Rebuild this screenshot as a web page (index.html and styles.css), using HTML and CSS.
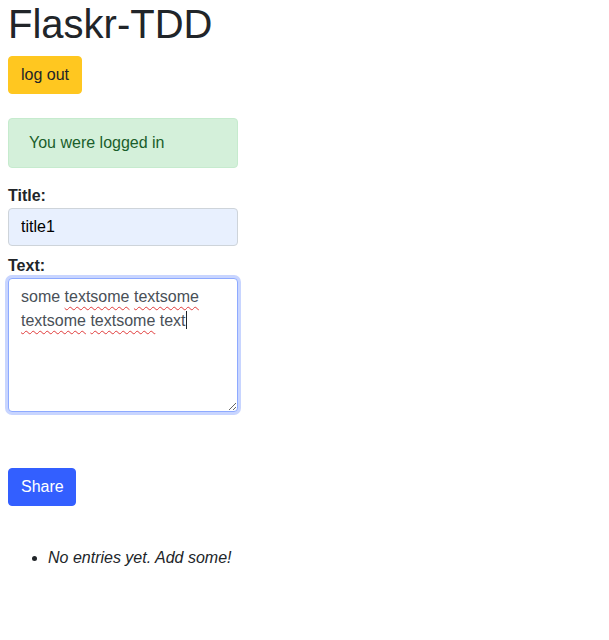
FILE: index.html
```html
<!DOCTYPE html>
<html lang="en">
<head>
<meta charset="utf-8">
<title>Flaskr-TDD</title>
<link rel="stylesheet" href="styles.css">
</head>
<body>
<div class="page">
  <h1 class="title">Flaskr-TDD</h1>
  <a class="btn btn-warning" href="#">log out</a>
  <div class="alert-success">You were logged in</div>
  <form class="add-entry">
    <dl class="fields">
      <dt class="label">Title:</dt>
      <dd class="field"><input class="form-control autofilled" type="text" name="title" value="title1"></dd>
      <dt class="label">Text:</dt>
      <dd class="field"><div class="form-control textarea focused" role="textbox" aria-multiline="true" contenteditable="true" spellcheck="false">some <span class="typo">textsome</span> <span class="typo">textsome</span> <span class="typo">textsome</span> <span class="typo">textsome</span> text<span class="caret"></span></div></dd>
      <dd class="spacer"></dd>
      <dd class="field"><button class="btn btn-primary btn-share" type="button">Share</button></dd>
    </dl>
  </form>
  <ul class="entries">
    <li><em>No entries yet. Add some!</em></li>
  </ul>
</div>
</body>
</html>
```

FILE: styles.css
```css
* { box-sizing: border-box; }
html, body { margin: 0; padding: 0; background: #fff; }
body {
  font-family: "Liberation Sans", Arial, sans-serif;
  font-size: 16px;
  line-height: 1.5;
  color: #212529;
}
.page { padding: 0 8px; }
.title {
  margin: 0 0 8px;
  font-size: 40px;
  font-weight: 400;
  line-height: 1.2;
}
.btn {
  display: inline-block;
  padding: 6px 12px;
  font-family: inherit;
  font-size: 16px;
  line-height: 1.5;
  border: 1px solid transparent;
  border-radius: 4px;
  text-decoration: none;
  cursor: pointer;
}
.btn-warning { background: #ffc720; border-color: #ffc720; color: #212529; }
.btn-primary { background: #335fff; border-color: #335fff; color: #fff; }
.btn-share { padding-right: 11px; }
.alert-success {
  width: 230px;
  margin: 24px 0 16px;
  padding: 12px 20px;
  background: #d4f0da;
  border: 1px solid #c6ebce;
  border-radius: 4px;
  color: #1a5e2b;
}
.add-entry { margin: 0; }
.fields { margin: 0 0 16px; }
.label { font-weight: 700; }
.field { margin: 0 0 8px; }
.spacer { margin: 0; height: 48px; }
.form-control {
  display: block;
  width: 230px;
  padding: 6px 12px;
  font-family: inherit;
  font-size: 16px;
  line-height: 1.5;
  color: #495057;
  background: #fff;
  border: 1px solid #ced4da;
  border-radius: 4px;
}
input.form-control { height: 38px; }
.autofilled { background: #e8f0fe; color: #000; }
.textarea {
  height: 134px;
  overflow: auto;
  resize: vertical;
  outline: none;
}
.focused {
  border-color: #8eaaff;
  box-shadow: 0 0 0 3px #c8d5ff;
}
.typo {
  text-decoration: underline wavy #e03a3a;
  text-decoration-thickness: 1px;
  text-underline-offset: 4px;
}
.caret {
  display: inline-block;
  width: 1px;
  height: 18px;
  background: #212529;
  vertical-align: -3px;
}
.entries {
  margin: 40px 0 0;
  padding-left: 40px;
}
.entries em { font-style: italic; }
```
